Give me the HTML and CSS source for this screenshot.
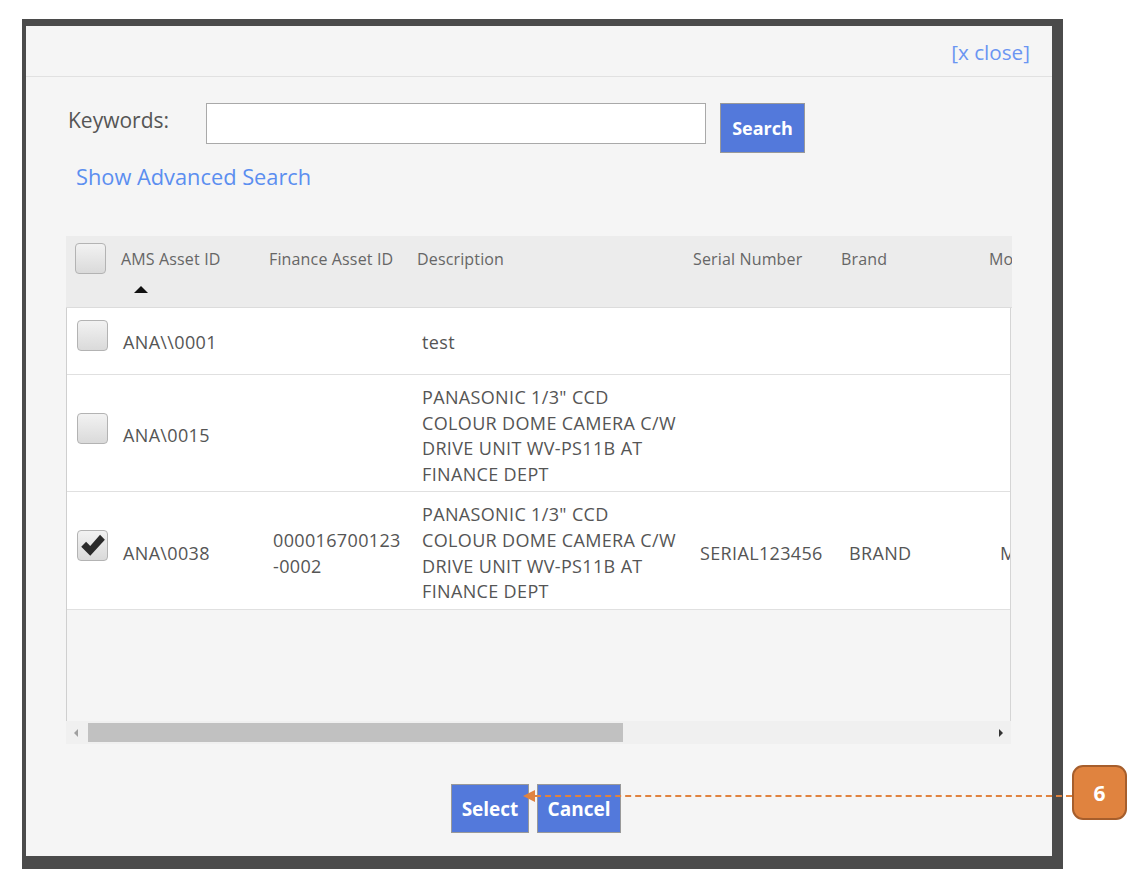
FILE: index.html
```html
<!DOCTYPE html>
<html>
<head>
<meta charset="utf-8">
<link rel="stylesheet" href="styles.css">
</head>
<body>
<div class="frame">
  <div class="modal">
    <div class="modal-head">
      <a class="close-link">[x close]</a>
    </div>
    <div class="modal-body">
      <div class="search-row">
        <label class="kw-label">Keywords:</label>
        <input class="kw-input" type="text">
        <button class="btn btn-search">Search</button>
      </div>
      <a class="adv-link">Show Advanced Search</a>

      <div class="grid">
        <div class="grid-head">
          <div class="hcell hchk"><span class="chk"></span></div>
          <div class="hcell">AMS Asset ID<span class="sort"></span></div>
          <div class="hcell">Finance Asset ID</div>
          <div class="hcell">Description</div>
          <div class="hcell">Serial Number</div>
          <div class="hcell">Brand</div>
          <div class="hcell">Model</div>
        </div>
        <div class="grid-body">
          <div class="row row-short">
            <div class="cell bchk"><span class="chk"></span></div>
            <div class="cell">ANA\\0001</div>
            <div class="cell"></div>
            <div class="cell">test</div>
            <div class="cell"></div>
            <div class="cell"></div>
            <div class="cell"></div>
          </div>
          <div class="row">
            <div class="cell bchk"><span class="chk"></span></div>
            <div class="cell">ANA\0015</div>
            <div class="cell"></div>
            <div class="cell">PANASONIC 1/3" CCD<br>COLOUR DOME CAMERA C/W<br>DRIVE UNIT WV-PS11B AT<br>FINANCE DEPT</div>
            <div class="cell"></div>
            <div class="cell"></div>
            <div class="cell"></div>
          </div>
          <div class="row">
            <div class="cell bchk"><span class="chk checked"><svg viewBox="0 0 24 24" width="27" height="27"><path d="M2 13 L6.3 8.7 L10 12.4 L18.7 2.5 L23 6.8 L10 21.2 Z" fill="#2b2b2b"/></svg></span></div>
            <div class="cell">ANA\0038</div>
            <div class="cell">000016700123<br>-0002</div>
            <div class="cell">PANASONIC 1/3" CCD<br>COLOUR DOME CAMERA C/W<br>DRIVE UNIT WV-PS11B AT<br>FINANCE DEPT</div>
            <div class="cell">SERIAL123456</div>
            <div class="cell">BRAND</div>
            <div class="cell">MODEL</div>
          </div>
          <div class="empty"></div>
        </div>
        <div class="hscroll">
          <span class="arr arr-left"></span>
          <div class="track"><div class="thumb"></div></div>
          <span class="arr arr-right"></span>
        </div>
      </div>

      <div class="actions">
        <button class="btn btn-action">Select</button>
        <button class="btn btn-action">Cancel</button>
      </div>
    </div>
  </div>
  <div class="callout-line"></div>
  <div class="callout-arrow"></div>
  <div class="callout">6</div>
</div>
</body>
</html>
```
FILE: styles.css
```css
html, body {
  margin: 0;
  padding: 0;
  background: #ffffff;
  font-family: "Open Sans", "Noto Sans", "Liberation Sans", sans-serif;
}

.frame {
  position: relative;
  margin: 19px 0 0 22px;
  width: 1041px;
  box-sizing: border-box;
  padding: 7px 11px 13px 4px;
  background: #4b4b4b;
}

.modal {
  background: #f5f5f5;
  height: 830px;
  display: flex;
  flex-direction: column;
}

.modal-head {
  height: 50px;
  border-bottom: 1px solid #e1e1e1;
  display: flex;
  justify-content: flex-end;
  align-items: center;
  padding-right: 22px;
}

.close-link {
  color: #6b95f2;
  font-size: 20.7px;
  margin-top: 2px;
}

.modal-body {
  padding: 26px 0 0 40px;
  display: flex;
  flex-direction: column;
}

.search-row {
  display: flex;
  align-items: flex-start;
  padding-left: 2px;
}

.kw-label {
  color: #555;
  font-size: 21px;
  width: 138px;
  line-height: 30px;
  margin-top: 2px;
}

.kw-input {
  width: 500px;
  height: 41px;
  box-sizing: border-box;
  border: 1px solid #a9a9a9;
  background: #fff;
  margin: 0;
  padding: 0 6px;
}

.btn {
  font-family: "Open Sans", "Noto Sans", sans-serif;
  font-weight: 700;
  color: #fff;
  background: #5379db;
  border: 1px solid #999;
  margin: 0;
  padding: 0;
  cursor: pointer;
}

.btn-search {
  margin-left: 14px;
  width: 85px;
  height: 50px;
  font-size: 18px;
}

.adv-link {
  color: #5b8ef0;
  font-size: 21.8px;
  margin: 9px 0 0 10px;
  line-height: 30px;
}

.grid {
  margin-top: 44px;
  width: 946px;
  overflow: hidden;
}

.grid-head {
  display: grid;
  grid-template-columns: 47px 148px 148px 276px 148px 148px 150px;
  background: #ececec;
  height: 71px;
  border-bottom: 1px solid #dcdcdc;
}

.hcell {
  color: #666;
  font-size: 16px;
  letter-spacing: 0.15px;
  padding: 12px 0 0 8px;
  white-space: nowrap;
  position: relative;
}

.hchk {
  padding: 7px 0 0 9px;
}

.sort {
  position: absolute;
  left: 21px;
  top: 50px;
  width: 0;
  height: 0;
  border-left: 7px solid transparent;
  border-right: 7px solid transparent;
  border-bottom: 7px solid #111;
}

.chk {
  display: flex;
  align-items: center;
  justify-content: center;
  width: 31px;
  height: 31px;
  box-sizing: border-box;
  border: 1px solid #b3b3b3;
  border-radius: 4px;
  background: linear-gradient(#f2f2f2, #dadada);
}

.bchk .chk {
  margin-top: -16px;
}

.grid-body {
  width: 945px;
  border-left: 1px solid #cfcfcf;
  border-right: 1px solid #d5d5d5;
  box-sizing: border-box;
  height: 413px;
  overflow: hidden;
}

.row {
  display: grid;
  grid-template-columns: 46px 150px 149px 278px 149px 151px 150px;
  align-items: center;
  background: #fff;
  border-bottom: 1px solid #e0e0e0;
  padding: 10px 0 4px;
  width: 1080px;
}

.row-short {
  box-sizing: border-box;
  padding: 4px 0 0;
  height: 67px;
}

.cell {
  color: #555;
  font-size: 18px;
  letter-spacing: 0.35px;
  line-height: 25.6px;
  padding-left: 10px;
  white-space: nowrap;
}

.bchk {
  padding-left: 10px;
}

.empty {
  height: 110px;
}

.hscroll {
  display: flex;
  align-items: center;
  height: 23px;
  width: 945px;
  background: #f0f0f0;
}

.arr {
  width: 0;
  height: 0;
  border-top: 4px solid transparent;
  border-bottom: 4px solid transparent;
}

.arr-left {
  border-right: 4px solid #a0a0a0;
  margin: 0 10px 0 8px;
}

.arr-right {
  border-left: 4px solid #333;
  margin: 0 8px 0 9px;
}

.track {
  flex: 1;
  height: 19px;
}

.thumb {
  width: 535px;
  height: 19px;
  background: #c1c1c1;
}

.actions {
  display: flex;
  justify-content: center;
  gap: 8px;
  margin-top: 40px;
  padding-right: 46px;
}

.btn-action {
  height: 49px;
  font-size: 19px;
}

.btn-action:first-child { width: 78px; }
.btn-action:last-child { width: 84px; }

.callout {
  position: absolute;
  left: 1050px;
  top: 746px;
  width: 55px;
  height: 55px;
  box-sizing: border-box;
  background: #e0833f;
  border: 2px solid #a65e2c;
  border-radius: 11px;
  color: #fff;
  font-weight: 700;
  font-size: 21px;
  display: flex;
  align-items: center;
  justify-content: center;
}

.callout-line {
  position: absolute;
  left: 513px;
  top: 776px;
  width: 537px;
  border-top: 2px dashed #e0833f;
}

.callout-arrow {
  position: absolute;
  left: 501px;
  top: 771px;
  width: 0;
  height: 0;
  border-top: 6px solid transparent;
  border-bottom: 6px solid transparent;
  border-right: 12px solid #e0833f;
}
```
